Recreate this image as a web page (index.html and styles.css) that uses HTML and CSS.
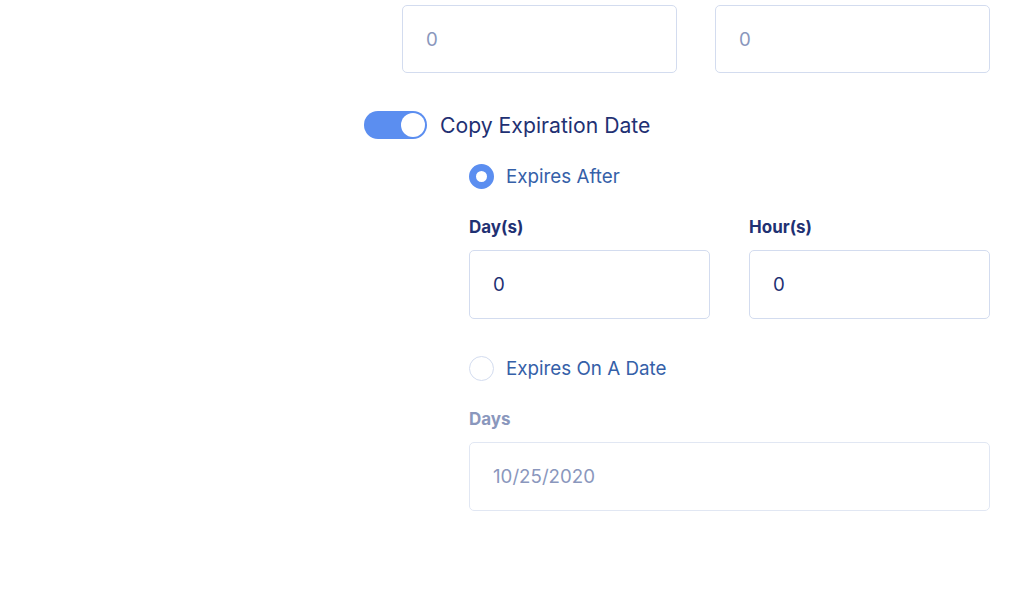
FILE: index.html
```html
<!DOCTYPE html>
<html lang="en">
<head>
    <meta charset="UTF-8">
    <meta name="viewport" content="width=device-width, initial-scale=1.0">
    <title>Copy Expiration Date</title>
    <link rel="stylesheet" href="styles.css">
</head>
<body>
    <div class="container">
        <div class="top-row">
            <input type="text" class="field muted" value="0">
            <input type="text" class="field muted" value="0">
        </div>

        <label class="switch-row">
            <span class="switch on"><span class="knob"></span></span>
            <span class="switch-label">Copy Expiration Date</span>
        </label>

        <div class="expiry">
            <label class="radio-row">
                <span class="radio checked"></span>
                <span class="radio-label">Expires After</span>
            </label>

            <div class="pair">
                <div class="group">
                    <label class="field-label">Day(s)</label>
                    <input type="text" class="field" value="0">
                </div>
                <div class="group">
                    <label class="field-label">Hour(s)</label>
                    <input type="text" class="field" value="0">
                </div>
            </div>

            <label class="radio-row second">
                <span class="radio"></span>
                <span class="radio-label">Expires On A Date</span>
            </label>

            <div class="group">
                <label class="field-label disabled">Days</label>
                <input type="text" class="field muted disabled" value="10/25/2020">
            </div>
        </div>
    </div>
</body>
</html>
```

FILE: styles.css
```css
:root {
    --navy: #1f3173;
    --blue-text: #3560a8;
    --toggle-blue: #5b8ef0;
    --border: #d3dcef;
    --muted: #8a97bd;
}

* {
    margin: 0;
    padding: 0;
    box-sizing: border-box;
}

body {
    font-family: Inter, 'Noto Sans', sans-serif;
    background: #ffffff;
    color: var(--navy);
}

.container {
    width: 626px;
    margin-left: 364px;
    padding-top: 5px;
}

.top-row {
    display: grid;
    grid-template-columns: 275px 275px;
    column-gap: 38px;
    padding-left: 38px;
}

.field {
    display: block;
    width: 100%;
    height: 69px;
    border: 1.5px solid var(--border);
    border-radius: 5px;
    padding: 0 23px;
    font-family: inherit;
    font-size: 18.7px;
    color: var(--navy);
    background: #fff;
    outline: none;
}

.top-row .field {
    height: 68px;
}

.field.muted {
    color: var(--muted);
}

.field.disabled {
    border-color: #e1e7f3;
}

.switch-row {
    display: flex;
    align-items: center;
    gap: 13px;
    margin-top: 38px;
    height: 28px;
}

.switch {
    position: relative;
    width: 63px;
    height: 28px;
    border-radius: 14px;
    background: var(--toggle-blue);
}

.switch .knob {
    position: absolute;
    top: 2px;
    right: 2px;
    width: 24px;
    height: 24px;
    border-radius: 50%;
    background: #fff;
}

.switch-label {
    font-size: 21.2px;
    color: var(--navy);
}

.expiry {
    padding-left: 105px;
}

.radio-row {
    display: flex;
    align-items: center;
    gap: 12px;
    height: 26px;
    margin-top: 24px;
}

.radio-row.second {
    margin-top: 36px;
}

.radio {
    width: 25px;
    height: 25px;
    border-radius: 50%;
    border: 1.5px solid #d3dcef;
    background: #fff;
}

.radio.checked {
    border: 7px solid var(--toggle-blue);
}

.radio-label {
    font-size: 18.8px;
    color: var(--blue-text);
}

.pair {
    display: grid;
    grid-template-columns: 241px 241px;
    column-gap: 39px;
    margin-top: 28px;
}

.field-label {
    display: block;
    font-size: 17px;
    font-weight: 700;
    line-height: 20px;
    margin-bottom: 13px;
    color: var(--navy);
}

.field-label.disabled {
    color: var(--muted);
}

.expiry > .group {
    margin-top: 28px;
}
```
